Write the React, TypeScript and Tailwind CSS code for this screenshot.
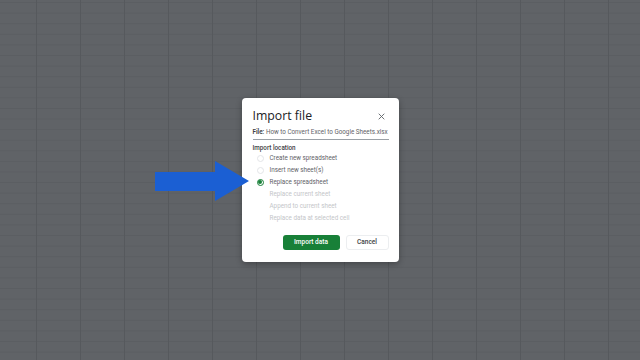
import React from "react";

const options = [
  { label: "Create new spreadsheet", state: "off" },
  { label: "Insert new sheet(s)", state: "off" },
  { label: "Replace spreadsheet", state: "on" },
  { label: "Replace current sheet", state: "disabled" },
  { label: "Append to current sheet", state: "disabled" },
  { label: "Replace data at selected cell", state: "disabled" },
];

export default function App() {
  return (
    <div
      className="relative w-[640px] h-[360px] overflow-hidden bg-[#606367] flex items-center justify-center bg-[linear-gradient(to_right,#56595d_1px,transparent_1px),linear-gradient(to_bottom,#5b5e62_1px,transparent_1px)] bg-[size:44px_10.6px] bg-[position:36px_2px]"
      style={{ fontFamily: "Roboto, 'Open Sans', Arial, sans-serif" }}
    >
      <div className="w-[157px] h-[164px] bg-white rounded-[4px] shadow-[0_2px_6px_rgba(0,0,0,0.3)] pt-[9px] pl-[11px] pr-[10px] flex flex-col">
        <div className="flex items-center justify-between h-[18px]">
          <span className="text-[12.3px] leading-[16px] text-[#202124]" style={{ fontFamily: "'Open Sans', Roboto, sans-serif" }}>
            Import file
          </span>
          <svg width="7" height="7" viewBox="0 0 10 10" className="mr-[4px]">
            <path d="M1 1L9 9M9 1L1 9" stroke="#5f6368" strokeWidth="1.3" />
          </svg>
        </div>
        <div className="mt-[3px] pb-[3px] border-b border-[#9aa0a6] text-[6.3px] leading-[8px] text-[#5f6368] whitespace-nowrap">
          <span className="font-semibold text-[#3c4043]">File:</span> How to Convert Excel to Google Sheets.xlsx
        </div>
        <div className="mt-[4px] text-[6.3px] leading-[8px] text-[#3c4043] font-medium">Import location</div>
        <div className="flex flex-col">
          {options.map((o) => (
            <div key={o.label} className="flex items-center h-[12px] pl-[4px]">
              {o.state === "disabled" ? (
                <span className="w-[7px] h-[7px]" />
              ) : o.state === "on" ? (
                <span className="w-[7px] h-[7px] rounded-full border border-[#188038] flex items-center justify-center">
                  <span className="w-[3.5px] h-[3.5px] rounded-full bg-[#188038]" />
                </span>
              ) : (
                <span className="w-[7px] h-[7px] rounded-full border border-[#e3e5e8]" />
              )}
              <span
                className={
                  "ml-[6px] text-[6.3px] leading-[8px] " +
                  (o.state === "disabled" ? "text-[#c4c6c9]" : "text-[#5f6368]")
                }
              >
                {o.label}
              </span>
            </div>
          ))}
        </div>
        <div className="flex justify-end gap-[6px] mt-[11px]">
          <div className="w-[57px] h-[15px] rounded-[3px] bg-[#188038] text-white text-[6.5px] font-medium flex items-center justify-center">
            Import data
          </div>
          <div className="w-[43px] h-[15px] rounded-[3px] border border-[#eceef0] text-[#3c4043] text-[6.5px] font-medium flex items-center justify-center">
            Cancel
          </div>
        </div>
      </div>
      <svg className="absolute left-[155px] top-[161px]" width="95" height="41" viewBox="0 0 95 41">
        <polygon points="0,11 60,11 60,0 94,20 60,40 60,30 0,30" fill="#1b5fd3" />
      </svg>
    </div>
  );
}
